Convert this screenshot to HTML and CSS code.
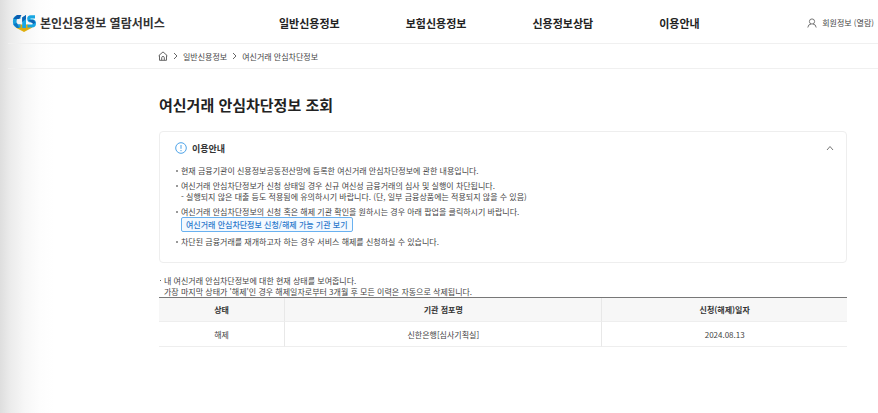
FILE: index.html
```
<!DOCTYPE html>
<html lang="ko">
  <head>
    <meta charset="UTF-8" />
    <meta name="viewport" content="width=device-width, initial-scale=1.0" />
    <title>여신거래 안심차단정보 조회</title>
    <link rel="stylesheet" href="styles.css">
  </head>
  <body>
    <header class="header">
      <a class="brand" href="#">
        <svg class="logo" viewBox="0 0 24 18" aria-hidden="true">
          <path d="M5 12.500 12 15l7-2.500 1.500 1L12 18l-8.500-4.500z" fill="#e0b010" />
          <path d="M8 10.500h8l2 3-6 3-6-3z" fill="#d9a90f" />
          <path d="M8.500 3H5.500Q2.700 3.500 2.700 7.500T5.500 12H8.500" fill="none" stroke="#18a0dc" stroke-width="3.600" />
          <path d="M1.200 5 5 1h4.500L7 5z" fill="#0b5cae" />
          <path d="M1.200 10 5 14h2l-2-5z" fill="#0f74c2" />
          <path d="M10.200 3.500 14 1v13h-3.800z" fill="#18a6e2" />
          <path d="M10.200 3.500 14 1v4l-3.800 3z" fill="#0d63b3" />
          <path d="M23 2.800h-4.200q-2 0-2 2t2 2h1.600q2 .2 2 2.700t-2.500 2.500H15.500" fill="none" stroke="#18a6e2" stroke-width="3.200" />
          <path d="M16 6 21.500 6l2 2.500-2 1.500z" fill="#0d63b3" />
        </svg>
        <span>본인신용정보 열람서비스</span>
      </a>
      <nav class="nav">
        <a href="#">일반신용정보</a>
        <a href="#">보험신용정보</a>
        <a href="#">신용정보상담</a>
        <a href="#">이용안내</a>
      </nav>
      <a class="user" href="#">
        <svg viewBox="0 0 10 10" aria-hidden="true">
          <circle cx="5" cy="3.500" r="2.600" />
          <path d="M.8 9.500Q1.200 6.200 4 6M9.200 9.500Q8.800 6.200 6 6" />
        </svg>
        <span>회원정보 (열람)</span>
      </a>
    </header>

    <nav class="breadcrumb">
      <a class="home" href="#" aria-label="홈">
        <svg viewBox="0 0 10 10">
          <path d="M.6 4.800 5 .9l4.400 3.900M1.500 4.300v5h7v-5M3.700 9.300V6.500q0-1 1.300-1t1.300 1v2.800" />
        </svg>
      </a>
      <svg class="arrow" viewBox="0 0 5 8"><path d="M1 1l3 3-3 3" /></svg>
      <a href="#">일반신용정보</a>
      <svg class="arrow" viewBox="0 0 5 8"><path d="M1 1l3 3-3 3" /></svg>
      <a href="#">여신거래 안심차단정보</a>
    </nav>

    <main class="content">
      <h1>여신거래 안심차단정보 조회</h1>

      <section class="guide">
        <div class="guide-head">
          <svg class="info" viewBox="0 0 12 12" aria-hidden="true">
            <circle cx="6" cy="6" r="5.300" />
            <path d="M6 3v3.800M6 8v1.200" />
          </svg>
          <h2>이용안내</h2>
          <button class="toggle" type="button" aria-label="접기">
            <svg viewBox="0 0 8 6"><path d="M1 5l3-3.500L7 5" /></svg>
          </button>
        </div>
        <ul>
          <li>현재 금융기관이 신용정보공동전산망에 등록한 여신거래 안심차단정보에 관한 내용입니다.</li>
          <li>
            여신거래 안심차단정보가 신청 상태일 경우 신규 여신성 금융거래의 심사 및 실행이 차단됩니다.<br>
            - 실행되지 않은 대출 등도 적용됨에 유의하시기 바랍니다. (단, 일부 금융상품에는 적용되지 않을 수 있음)
          </li>
          <li>
            여신거래 안심차단정보의 신청 혹은 해제 기관 확인을 원하시는 경우 아래 팝업을 클릭하시기 바랍니다.
            <button class="popup" type="button">여신거래 안심차단정보 신청/해제 가능 기관 보기</button>
          </li>
          <li>차단된 금융거래를 재개하고자 하는 경우 서비스 해제를 신청하실 수 있습니다.</li>
        </ul>
      </section>

      <p class="note">
        내 여신거래 안심차단정보에 대한 현재 상태를 보여줍니다.<br>
        가장 마지막 상태가 '해제'인 경우 해제일자로부터 3개월 후 모든 이력은 자동으로 삭제됩니다.
      </p>

      <table>
        <thead>
          <tr>
            <th class="col-state">상태</th>
            <th class="col-branch">기관 점포명</th>
            <th class="col-date">신청(해제)일자</th>
          </tr>
        </thead>
        <tbody>
          <tr>
            <td>해제</td>
            <td>신한은행[심사기획실]</td>
            <td>2024.08.13</td>
          </tr>
        </tbody>
      </table>
    </main>
  </body>
</html>
```
FILE: styles.css
```
* {
  margin: 0;
  padding: 0;
  box-sizing: border-box;
}
body {
  min-height: 100vh;
  background: linear-gradient(to right, #dedede, #ebebeb 10px, #f7f7f7 25px, #fdfdfd 40px, #fff 54px);
  color: #444;
  font-family: "Noto Sans CJK KR", sans-serif;
  font-size: 8px;
  line-height: 11px;
}
a {
  color: inherit;
  text-decoration: none;
}
svg {
  display: block;
  fill: none;
  stroke: #666;
}
.header {
  display: grid;
  grid-template-columns: 267px 1fr auto;
  align-items: center;
  height: 44px;
  margin-left: 8px;
  padding: 2px 4px 0;
  border-bottom: 1px solid #f0f0f0;
}
.brand {
  display: flex;
  align-items: center;
  gap: 4px;
  color: #333;
  font-size: 12px;
  font-weight: 700;
  line-height: 16px;
}
.logo {
  width: 24px;
  height: 18px;
  stroke: none;
}
.nav {
  display: flex;
  gap: 66px;
  color: #222;
  font-size: 11px;
  font-weight: 700;
  line-height: 16px;
}
.user {
  display: flex;
  align-items: center;
  gap: 5px;
}
.user svg {
  width: 10px;
  height: 10px;
  stroke: #777;
}
.breadcrumb {
  display: flex;
  align-items: center;
  gap: 5px;
  height: 25px;
  margin-left: 8px;
  padding-left: 150px;
  border-bottom: 1px solid #f0f0f0;
}
.home svg {
  width: 10px;
  height: 10px;
}
.arrow {
  width: 5px;
  height: 8px;
}
.content {
  padding: 24px 31px 0 159px;
}
h1 {
  color: #222;
  font-size: 15px;
  font-weight: 700;
  line-height: 24px;
}
.guide {
  margin-top: 14px;
  padding: 8px 12px 15px 15px;
  border: 1px solid #eee;
  border-radius: 4px;
  background: #fff;
}
.guide-head {
  display: flex;
  align-items: center;
  gap: 5px;
  height: 16px;
}
.info {
  width: 12px;
  height: 12px;
  stroke: #4da3e8;
}
h2 {
  color: #333;
  font-size: 9px;
  font-weight: 700;
}
.toggle {
  margin-left: auto;
  border: 0;
  background: none;
}
.toggle svg {
  width: 8px;
  height: 6px;
  stroke: #777;
}
ul {
  display: grid;
  gap: 4px;
  margin-top: 9px;
  list-style: none;
}
li {
  position: relative;
  padding-left: 6px;
}
li::before {
  content: "";
  position: absolute;
  top: 5px;
  left: 1px;
  width: 2px;
  height: 2px;
  background: #999;
}
.popup {
  display: block;
  height: 15px;
  padding: 0 4px;
  border: 1px solid #69b1f0;
  border-radius: 2px;
  background: #f3f9ff;
  color: #2b78cc;
  font-family: inherit;
  font-size: 8px;
  font-weight: 500;
  line-height: 13px;
}
.note {
  position: relative;
  margin-top: 12px;
  padding-left: 5px;
}
.note::before {
  content: "";
  position: absolute;
  top: 5px;
  left: 1px;
  width: 1px;
  height: 1px;
  background: #666;
}
table {
  width: 100%;
  border-top: 1px solid #777;
  border-spacing: 0;
  table-layout: fixed;
}
.col-state {
  width: 18.2%;
}
.col-branch {
  width: 46.1%;
}
.col-date {
  width: 35.7%;
}
th,
td {
  height: 25px;
  border-bottom: 1px solid #eee;
  text-align: center;
}
th + th,
td + td {
  border-left: 1px solid #e8e8e8;
}
th {
  height: 24px;
  background: #f7f7f7;
  color: #333;
  font-weight: 700;
}
```
